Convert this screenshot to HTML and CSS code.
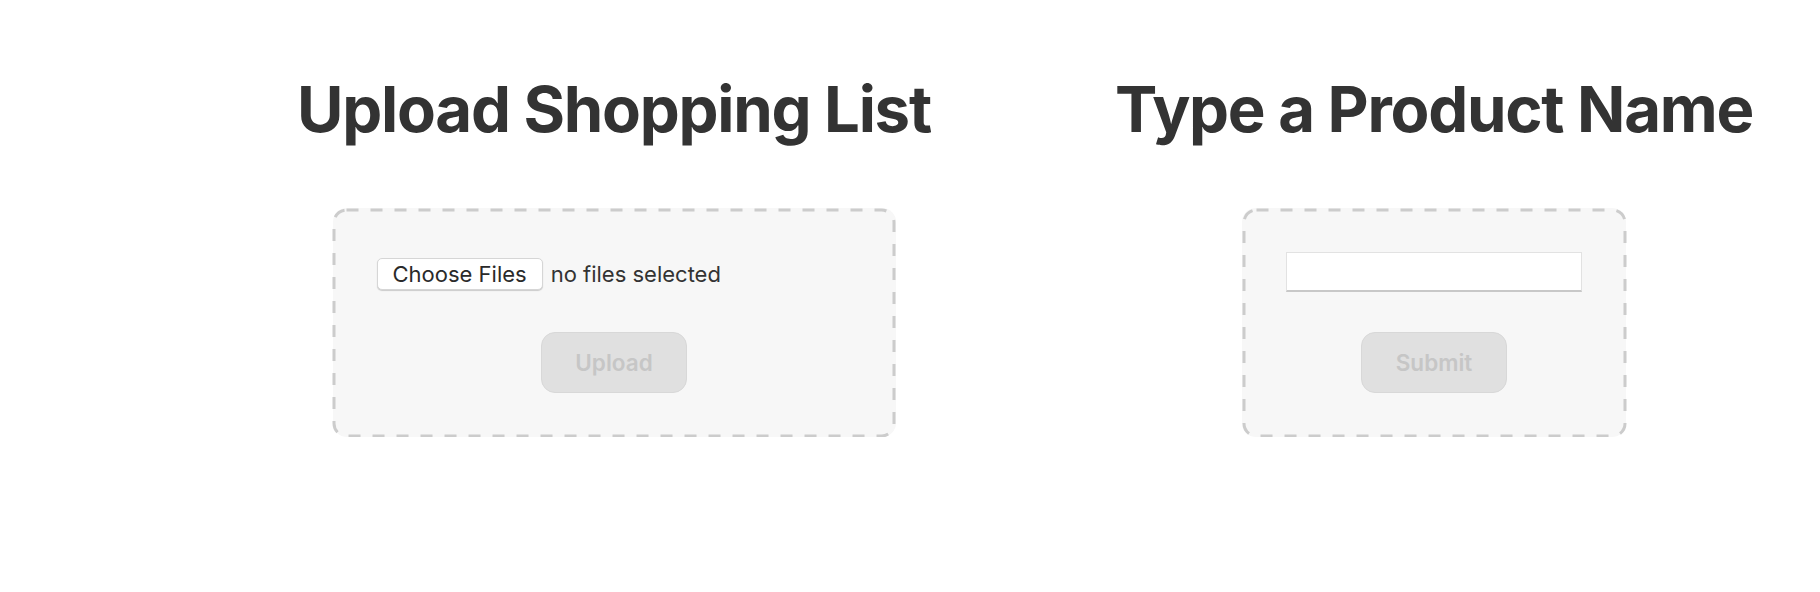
FILE: index.html
```html
<!DOCTYPE html>
<html lang="en">
<head>
<meta charset="utf-8">
<title>Shopping</title>
<link rel="stylesheet" href="styles.css">
</head>
<body>
<main class="page">
  <section class="column">
    <h1 class="title">Upload Shopping List</h1>
    <form class="panel panel-upload">
      <svg class="dash-frame" aria-hidden="true"><rect class="dash-rect" x="0" y="0" width="100%" height="100%" rx="12.5" ry="12.5"/></svg>
      <div class="file-row">
        <label class="file-button">Choose Files</label>
        <span class="file-status">no files selected</span>
      </div>
      <button class="action" type="button" disabled>Upload</button>
    </form>
  </section>
  <section class="column">
    <h1 class="title">Type a Product Name</h1>
    <form class="panel panel-type">
      <svg class="dash-frame" aria-hidden="true"><rect class="dash-rect" x="0" y="0" width="100%" height="100%" rx="12.5" ry="12.5"/></svg>
      <input class="text-input" type="text">
      <button class="action" type="button" disabled>Submit</button>
    </form>
  </section>
</main>
</body>
</html>
```
FILE: styles.css
```css
html, body {
  margin: 0;
  padding: 0;
  background: #ffffff;
}

body {
  font-family: Inter, "Noto Sans", "Liberation Sans", sans-serif;
  color: #333333;
}

.page {
  display: flex;
  gap: 160px;
  padding-left: 284px;
  padding-top: 70px;
}

.column {
  width: 660px;
  display: flex;
  flex-direction: column;
  align-items: center;
}

.title {
  margin: 0;
  font-size: 63.5px;
  line-height: 77px;
  font-weight: 700;
  letter-spacing: -0.02em;
  color: #333333;
  white-space: nowrap;
}

.panel {
  position: relative;
  margin-top: 61px;
  box-sizing: border-box;
  border: 3px solid transparent;
  border-radius: 14px;
  background: #f7f7f7;
  padding: 41px;
  display: flex;
  flex-direction: column;
  gap: 40px;
}

.dash-frame {
  position: absolute;
  top: -1.5px;
  left: -1.5px;
  width: calc(100% + 3px);
  height: calc(100% + 3px);
  overflow: visible;
  pointer-events: none;
}

.dash-rect {
  fill: none;
  stroke: #cccccc;
  stroke-width: 3;
  stroke-dasharray: 12 12;
}

.panel-upload {
  width: 563px;
}

.panel-type {
  width: 384px;
}

.file-row {
  box-sizing: border-box;
  height: 40px;
  padding-top: 4px;
  display: flex;
  align-items: center;
  gap: 8px;
}

.file-button {
  box-sizing: border-box;
  height: 32px;
  padding: 0 15px;
  display: flex;
  align-items: center;
  background: #ffffff;
  border: 1px solid #d6d6d6;
  border-radius: 5px;
  box-shadow: 0 1px 1px rgba(0, 0, 0, 0.18);
  font-size: 22px;
  color: #2a2a2a;
}

.file-status {
  font-size: 22px;
  color: #333333;
}

.text-input {
  box-sizing: border-box;
  height: 40px;
  width: 100%;
  margin: 0;
  background: #ffffff;
  border: 1px solid #e2e2e2;
  border-bottom: 2px solid #c8c8c8;
  border-radius: 0;
  outline: none;
}

.action {
  align-self: center;
  box-sizing: border-box;
  width: 146px;
  height: 61px;
  margin: 0;
  background: #e0e0e0;
  border: 1px solid #d8d8d8;
  border-radius: 14px;
  font-family: Inter, "Noto Sans", "Liberation Sans", sans-serif;
  font-size: 22.5px;
  font-weight: 600;
  color: #c6c6c6;
}
```
